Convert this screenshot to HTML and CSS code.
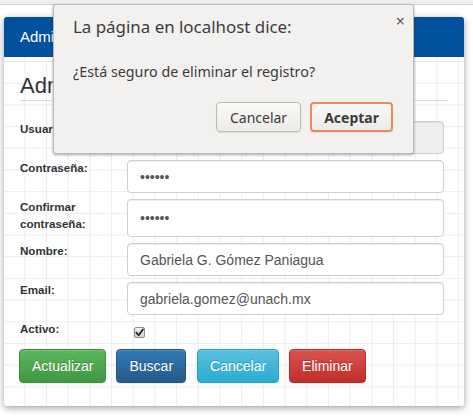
FILE: index.html
```html
<!DOCTYPE html>
<html lang="es">
<head>
<meta charset="utf-8">
<title>Administración de usuarios</title>
<link rel="stylesheet" href="styles.css">
</head>
<body>
<div class="topbar"></div>
<div class="panel">
  <div class="panel-heading">Administración de usuarios</div>
  <div class="panel-body">
    <h3 class="title">Administración de usuarios</h3>
    <hr class="rule">
    <div class="row">
      <label class="label">Usuario:</label>
      <input class="field" type="text" value="ggomez" disabled>
    </div>
    <div class="row">
      <label class="label">Contraseña:</label>
      <input class="field" type="password" value="123456">
    </div>
    <div class="row">
      <label class="label">Confirmar contraseña:</label>
      <input class="field" type="password" value="123456">
    </div>
    <div class="row">
      <label class="label">Nombre:</label>
      <input class="field" type="text" value="Gabriela G. Gómez Paniagua">
    </div>
    <div class="row">
      <label class="label">Email:</label>
      <input class="field" type="text" value="gabriela.gomez@unach.mx">
    </div>
    <div class="row">
      <label class="label">Activo:</label>
      <div class="check-cell">
        <span class="checkbox"><svg width="9" height="9" viewBox="0 0 9 9"><path d="M1.3 4.6 L3.6 7.2 L7.8 1.6" fill="none" stroke="#2b2b2b" stroke-width="1.9" stroke-linecap="round" stroke-linejoin="round"/></svg></span>
      </div>
    </div>
    <div class="actions">
      <button class="btn btn-success">Actualizar</button>
      <button class="btn btn-primary">Buscar</button>
      <button class="btn btn-info">Cancelar</button>
      <button class="btn btn-danger">Eliminar</button>
    </div>
  </div>
</div>

<div class="dialog">
  <div class="dialog-title">La página en localhost dice:</div>
  <span class="dialog-close">×</span>
  <div class="dialog-msg">¿Está seguro de eliminar el registro?</div>
  <div class="dialog-actions">
    <button class="dbtn">Cancelar</button>
    <button class="dbtn dbtn-ok">Aceptar</button>
  </div>
</div>
</body>
</html>
```
FILE: styles.css
```css
* { box-sizing: border-box; }
html, body { margin: 0; padding: 0; }
body {
  width: 473px;
  height: 417px;
  background: #ffffff;
  font-family: "Liberation Sans", Arial, sans-serif;
  font-size: 14px;
  color: #333;
  position: relative;
  overflow: hidden;
}
.topbar {
  height: 5px;
  background: #efefef;
  border-bottom: 1px solid #d3d3d3;
}
.panel {
  margin: 12px 0 0 4px;
  width: 460px;
  border-radius: 4px;
  background: #fff;
  box-shadow: 0 2px 7px rgba(0,0,0,0.38);
}
.panel-heading {
  height: 40px;
  padding: 10px 16px;
  background: #02519f;
  color: #fff;
  font-size: 15px;
  line-height: 20px;
  border-radius: 3px 3px 0 0;
  white-space: nowrap;
  overflow: hidden;
}
.panel-body {
  padding: 15px 16px 23px 16px;
  background-color: #fff;
  background-image:
    linear-gradient(to right, #ececf3 1px, transparent 1px),
    linear-gradient(to bottom, #ececf3 1px, transparent 1px);
  background-size: 21.7px 21.7px;
  background-position: 20.3px 4px;
  border-radius: 0 0 3px 3px;
}
.title {
  margin: 2px 0 0 0;
  font-size: 22px;
  line-height: 24px;
  font-weight: 400;
  color: #333;
  white-space: nowrap;
  overflow: hidden;
}
.rule {
  margin: 2px 0 20px 0;
  border: 0;
  border-top: 1px solid #dcdcdc;
  height: 0;
}
.row {
  display: flex;
  align-items: stretch;
  margin-bottom: 6px;
}
.label {
  width: 107px;
  flex: none;
  font-size: 11.6px;
  line-height: 1.42857;
  font-weight: 700;
  margin-bottom: 5px;
  color: #333;
}
.field {
  width: 317px;
  min-height: 33px;
  padding: 0 12px;
  font-family: "Liberation Sans", Arial, sans-serif;
  font-size: 14px;
  color: #555;
  background: #fff;
  border: 1px solid #cfcfcf;
  border-radius: 4px;
  box-shadow: inset 0 1px 1px rgba(0,0,0,0.075);
  margin: 0;
}
.field:disabled { background: #eee; }
.check-cell { padding: 6px 0 0 7px; }
.checkbox {
  display: flex;
  align-items: center;
  justify-content: center;
  width: 11px;
  height: 11px;
  border: 1px solid #8d8d8d;
  border-radius: 2px;
  background: linear-gradient(#f4f4f4, #d4d4d4);
}
.actions {
  display: flex;
  gap: 10px;
  margin-left: -1px;
}
.btn {
  font-family: "Liberation Sans", Arial, sans-serif;
  font-size: 14px;
  line-height: 20px;
  padding: 6px 12px;
  height: 34px;
  color: #fff;
  border: 1px solid transparent;
  border-radius: 4px;
  text-shadow: 0 -1px 0 rgba(0,0,0,0.2);
  box-shadow: inset 0 1px 0 rgba(255,255,255,0.15), 0 1px 1px rgba(0,0,0,0.075);
}
.btn-success { background: linear-gradient(#5cb85c, #419641); border-color: #3e8f3e; }
.btn-primary { background: linear-gradient(#337ab7, #265a88); border-color: #245580; }
.btn-info { background: linear-gradient(#5bc0de, #2aabd2); border-color: #28a4c9; margin-left: 1px; }
.btn-danger { background: linear-gradient(#d9534f, #c12e2a); border-color: #b92c28; }

.dialog {
  position: absolute;
  left: 53px;
  top: 4px;
  width: 361px;
  height: 150px;
  background: #f2f1f0;
  border: 1px solid #bdbab5;
  border-radius: 3px;
  box-shadow: 0 1px 3px rgba(0,0,0,0.35);
  padding: 10px 20px 0 19px;
  font-family: "Noto Sans", "DejaVu Sans", sans-serif;
  color: #3c3c3c;
}
.dialog-title {
  font-size: 16.9px;
  line-height: 24px;
  color: #3c3c3c;
}
.dialog-close {
  position: absolute;
  right: 8px;
  top: 6px;
  font-size: 16px;
  color: #5a5a5a;
  line-height: 20px;
}
.dialog-msg {
  margin-top: 23px;
  font-size: 14.3px;
  line-height: 20px;
}
.dialog-actions {
  display: flex;
  justify-content: flex-end;
  gap: 9px;
  margin-top: 20px;
}
.dbtn {
  height: 30px;
  font-family: "Noto Sans", "DejaVu Sans", sans-serif;
  font-size: 14px;
  color: #3c3c3c;
  background: linear-gradient(#f9f9f8, #ecebe9);
  border: 1px solid #bcb9b4;
  border-radius: 4px;
  padding: 0 13px;
  box-shadow: 0 1px 1px rgba(0,0,0,0.08);
}
.dbtn-ok {
  font-weight: 700;
  border: 2px solid #eb8a60;
  padding: 0 12px;
}
```
